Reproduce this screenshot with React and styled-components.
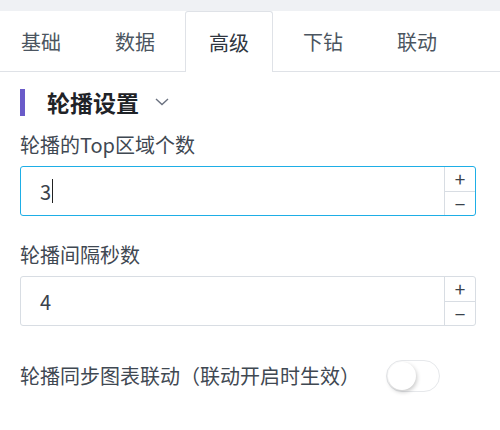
import React, { useState } from 'react'
import styled, { createGlobalStyle } from 'styled-components'

const GlobalStyle = createGlobalStyle`
    html, body {
        margin: 0;
        padding: 0;
        background: #ffffff;
        font-family: "Noto Sans CJK SC", "Noto Sans", sans-serif;
    }
`

const tabs = ['基础', '数据', '高级', '下钻', '联动']

const App = () => {

    const [active, setActive] = useState(2)
    const [linked, setLinked] = useState(false)
    const [top, setTop] = useState(3)
    const [interval, setInterval] = useState(4)

    return (
        <Page>
            <GlobalStyle />
            <TopStrip />
            <TabBar>
                {tabs.map((t, i) => (
                    <Tab key={t} $active={i === active} onClick={() => setActive(i)}>{t}</Tab>
                ))}
            </TabBar>
            <Panel>
                <SectionTitle>
                    <Marker />
                    <span>轮播设置</span>
                    <svg width="14" height="8" viewBox="0 0 14 8">
                        <path d="M1 1 L7 6.5 L13 1" fill="none" stroke="#6b7280" strokeWidth="1.4" />
                    </svg>
                </SectionTitle>

                <Field>
                    <Label>轮播的Top区域个数</Label>
                    <NumberBox $focused>
                        <Value>{top}<Caret /></Value>
                        <Stepper>
                            <StepButton onClick={() => setTop(top + 1)}>+</StepButton>
                            <StepButton onClick={() => setTop(top - 1)}>−</StepButton>
                        </Stepper>
                    </NumberBox>
                </Field>

                <Field>
                    <Label>轮播间隔秒数</Label>
                    <NumberBox>
                        <Value>{interval}</Value>
                        <Stepper>
                            <StepButton onClick={() => setInterval(interval + 1)}>+</StepButton>
                            <StepButton onClick={() => setInterval(interval - 1)}>−</StepButton>
                        </Stepper>
                    </NumberBox>
                </Field>

                <SwitchRow>
                    <Label>轮播同步图表联动（联动开启时生效）</Label>
                    <Switch $on={linked} onClick={() => setLinked(!linked)}>
                        <Knob $on={linked} />
                    </Switch>
                </SwitchRow>
            </Panel>
        </Page>
    )
}

const Page = styled.div`
    width: 500px;
    height: 430px;
    overflow: hidden;
    background: #ffffff;
`

const TopStrip = styled.div`
    height: 11px;
    background: #eff1f4;
`

const TabBar = styled.div`
    display: flex;
    gap: 6px;
    height: 60px;
    margin-left: -3px;
    border-bottom: 1px solid #dfe2e7;
`

const Tab = styled.div`
    width: 88px;
    box-sizing: border-box;
    display: flex;
    align-items: center;
    justify-content: center;
    font-size: 20px;
    color: ${p => p.$active ? '#2f3640' : '#4b5560'};
    background: #ffffff;
    border: 1px solid ${p => p.$active ? '#dfe2e7' : 'transparent'};
    border-bottom: none;
    border-radius: 3px 3px 0 0;
    margin-bottom: ${p => p.$active ? '-1px' : '0'};
    height: ${p => p.$active ? '61px' : '60px'};
    cursor: pointer;
`

const Panel = styled.div`
    padding: 16px 24px 0 20px;
`

const SectionTitle = styled.div`
    display: flex;
    align-items: center;
    height: 28px;
    font-size: 23px;
    font-weight: 700;
    color: #1f2328;

    span {
        margin-left: 22px;
        margin-right: 16px;
    }
`

const Marker = styled.div`
    width: 5px;
    height: 27px;
    background: #6a5bc9;
`

const Field = styled.div`
    margin-top: 17px;
    display: flex;
    flex-direction: column;
    & + & {
        margin-top: 27px;
    }
`

const Label = styled.div`
    font-size: 20px;
    line-height: 24px;
    color: #3f4852;
`

const NumberBox = styled.div`
    margin-top: 9px;
    height: 50px;
    box-sizing: border-box;
    display: flex;
    border: 1px solid ${p => p.$focused ? '#1eaee6' : '#d8dde3'};
    border-radius: 3px;
    background: #ffffff;
`

const Value = styled.div`
    flex: 1;
    display: flex;
    align-items: center;
    padding-left: 19px;
    font-size: 20px;
    color: #3a424b;
`

const Caret = styled.span`
    display: inline-block;
    width: 1px;
    height: 24px;
    margin-left: 1px;
    background: #222;
`

const Stepper = styled.div`
    width: 30px;
    display: flex;
    flex-direction: column;
    border-left: 1px solid #d8dde3;
`

const StepButton = styled.div`
    flex: 1;
    display: flex;
    align-items: center;
    justify-content: center;
    font-size: 19px;
    line-height: 1;
    color: #3a424b;
    cursor: pointer;
    & + & {
        border-top: 1px solid #d8dde3;
    }
`

const SwitchRow = styled.div`
    margin-top: 34px;
    display: flex;
    align-items: center;
    gap: 26px;
`

const Switch = styled.div`
    position: relative;
    width: 54px;
    height: 32px;
    box-sizing: border-box;
    border-radius: 16px;
    border: 1px solid #e6e8eb;
    background: ${p => p.$on ? '#1eaee6' : '#ffffff'};
    cursor: pointer;
`

const Knob = styled.div`
    position: absolute;
    top: 1px;
    left: ${p => p.$on ? '24px' : '1px'};
    width: 28px;
    height: 28px;
    border-radius: 50%;
    background: #ffffff;
    box-shadow: 1px 2px 4px rgba(0, 0, 0, 0.22);
`

export default App
